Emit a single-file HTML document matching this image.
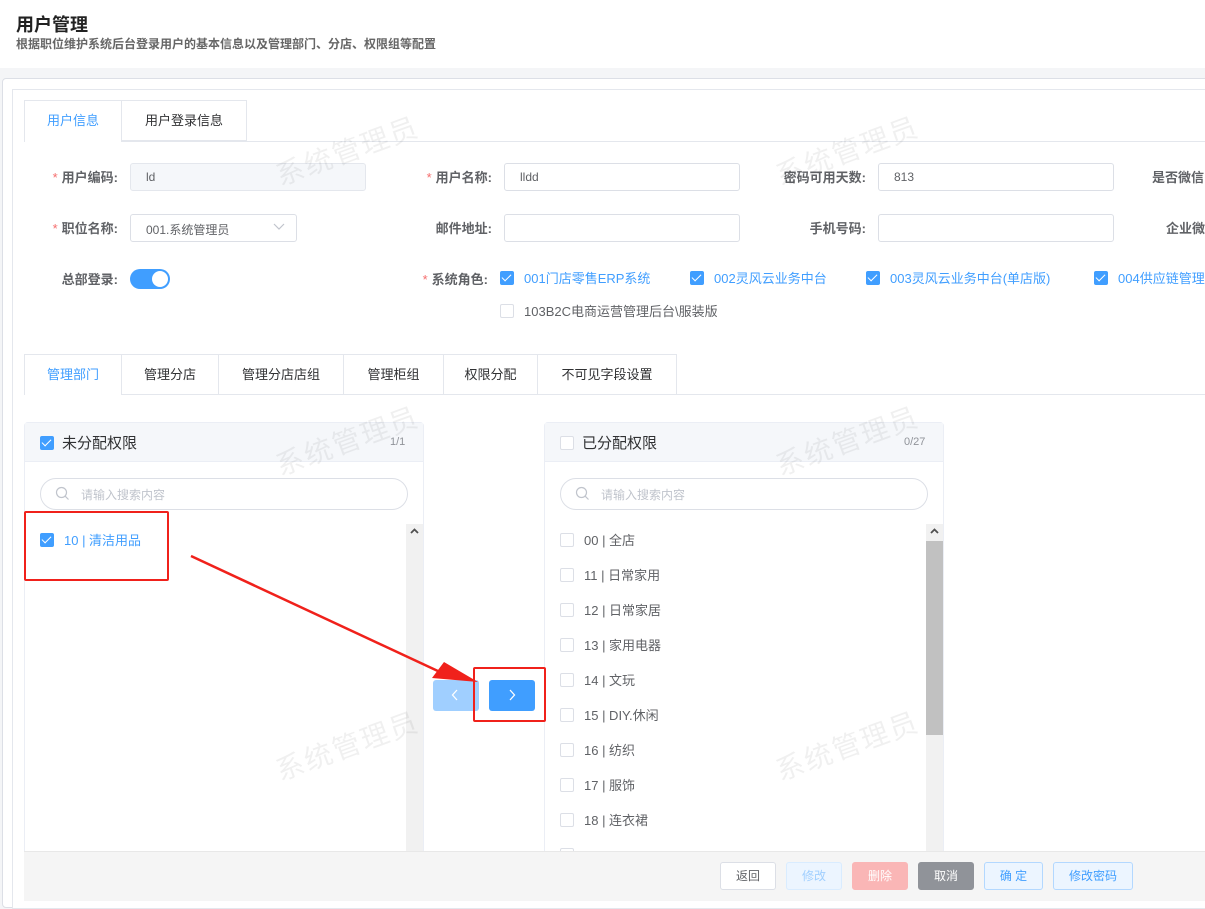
<!DOCTYPE html>
<html><head><meta charset="utf-8"><style>
*{box-sizing:border-box;margin:0;padding:0}
body{width:1205px;height:905px;overflow:hidden;background:#f4f5f7;font-family:"Liberation Sans","Noto Sans CJK SC",sans-serif;position:relative;color:#606266}
.a{position:absolute}
.hdr{left:0;top:0;width:1205px;height:68px;background:#fff}
.card{left:2px;top:78px;width:1210px;height:830px;background:#fff;border:1px solid #dcdfe6;border-radius:4px}
.lbl{font-size:13px;font-weight:bold;color:#606266;text-align:right;white-space:nowrap}
.req{color:#f56c6c;font-weight:normal;margin-right:4px}
.inp{height:28px;border:1px solid #dcdfe6;border-radius:3px;background:#fff;font-size:12px;color:#606266;padding:6px 15px}
.tab{height:41px;border:1px solid #e4e7ed;border-bottom:none;font-size:13px;color:#303133;text-align:center;line-height:40px}
.cb{width:14px;height:14px;border:1px solid #dcdfe6;border-radius:2px;background:#fff}
.cbon{width:14px;height:14px;border-radius:2px;background:#409eff}
.cbon:after{content:"";position:absolute;left:4px;top:1px;width:4px;height:8px;border:solid #fff;border-width:0 1.5px 1.5px 0;transform:rotate(45deg)}
.role{font-size:13px;color:#409eff;white-space:nowrap}
.item{font-size:13px;color:#606266;white-space:nowrap}
.wm{font-size:28px;color:rgba(0,0,0,0.06);transform:rotate(-20deg);white-space:nowrap;letter-spacing:2px}
.btn{top:862px;height:28px;border-radius:3px;font-size:12px;text-align:center;line-height:26px}
</style></head><body>
<div class="a hdr"></div>
<div class="a" style="left:16px;top:11px;font-size:18px;font-weight:bold;color:#222">用户管理</div>
<div class="a" style="left:16px;top:35px;font-size:12px;font-weight:bold;color:#666">根据职位维护系统后台登录用户的基本信息以及管理部门、分店、权限组等配置</div>
<div class="a card"></div>
<div class="a" style="left:12px;top:89px;width:1200px;height:820px;background:#fff;border:1px solid #e4e7ed"></div>

<div class="a" style="left:24px;top:141px;width:1190px;height:1px;background:#e4e7ed"></div>
<div class="a tab" style="left:24px;top:100px;width:98px;color:#409eff;background:#fff;height:42px">用户信息</div>
<div class="a tab" style="left:121px;top:100px;width:126px;border-bottom:1px solid #e4e7ed">用户登录信息</div>

<div class="a lbl" style="left:30px;top:167px;width:88px"><span class="req">*</span>用户编码:</div>
<div class="a inp" style="left:130px;top:163px;width:236px;background:#f5f7fa;border-color:#e4e7ed">ld</div>
<div class="a lbl" style="left:400px;top:167px;width:92px"><span class="req">*</span>用户名称:</div>
<div class="a inp" style="left:504px;top:163px;width:236px">lldd</div>
<div class="a lbl" style="left:760px;top:167px;width:106px">密码可用天数:</div>
<div class="a inp" style="left:878px;top:163px;width:236px">813</div>
<div class="a lbl" style="left:1152px;top:167px;text-align:left">是否微信</div>

<div class="a lbl" style="left:30px;top:218px;width:88px"><span class="req">*</span>职位名称:</div>
<div class="a inp" style="left:130px;top:214px;width:167px">001.系统管理员</div>
<svg class="a" style="left:273px;top:223px" width="12" height="8"><path d="M1 1L6 6L11 1" fill="none" stroke="#c0c4cc" stroke-width="1.2"/></svg>
<div class="a lbl" style="left:400px;top:218px;width:92px">邮件地址:</div>
<div class="a inp" style="left:504px;top:214px;width:236px"></div>
<div class="a lbl" style="left:760px;top:218px;width:106px">手机号码:</div>
<div class="a inp" style="left:878px;top:214px;width:236px"></div>
<div class="a lbl" style="left:1166px;top:218px;text-align:left">企业微</div>

<div class="a lbl" style="left:30px;top:269px;width:88px">总部登录:</div>
<div class="a" style="left:130px;top:269px;width:40px;height:20px;border-radius:10px;background:#409eff"></div>
<div class="a" style="left:152px;top:271px;width:16px;height:16px;border-radius:50%;background:#fff"></div>
<div class="a lbl" style="left:400px;top:269px;width:88px"><span class="req">*</span>系统角色:</div>
<div class="a cbon" style="left:500px;top:271px"></div><div class="a role" style="left:524px;top:268px">001门店零售ERP系统</div>
<div class="a cbon" style="left:690px;top:271px"></div><div class="a role" style="left:714px;top:268px">002灵风云业务中台</div>
<div class="a cbon" style="left:866px;top:271px"></div><div class="a role" style="left:890px;top:268px">003灵风云业务中台(单店版)</div>
<div class="a cbon" style="left:1094px;top:271px"></div><div class="a role" style="left:1118px;top:268px">004供应链管理</div>
<div class="a cb" style="left:500px;top:304px"></div><div class="a item" style="left:524px;top:301px">103B2C电商运营管理后台\服装版</div>

<div class="a" style="left:24px;top:394px;width:1190px;height:1px;background:#e4e7ed"></div>
<div class="a tab" style="left:24px;top:354px;width:98px;color:#409eff;background:#fff;height:41px">管理部门</div>
<div class="a tab" style="left:121px;top:354px;width:98px;border-bottom:1px solid #e4e7ed">管理分店</div>
<div class="a tab" style="left:218px;top:354px;width:126px;border-bottom:1px solid #e4e7ed">管理分店店组</div>
<div class="a tab" style="left:343px;top:354px;width:101px;border-bottom:1px solid #e4e7ed">管理柜组</div>
<div class="a tab" style="left:443px;top:354px;width:95px;border-bottom:1px solid #e4e7ed">权限分配</div>
<div class="a tab" style="left:537px;top:354px;width:140px;border-bottom:1px solid #e4e7ed">不可见字段设置</div>

<!-- left transfer -->
<div class="a" style="left:24px;top:422px;width:400px;height:440px;border:1px solid #ebeef5;border-radius:4px;background:#fff"></div>
<div class="a" style="left:25px;top:423px;width:398px;height:39px;background:#f5f7fa;border-bottom:1px solid #ebeef5"></div>
<div class="a cbon" style="left:40px;top:436px"></div>
<div class="a" style="left:62px;top:432px;font-size:15px;color:#303133">未分配权限</div>
<div class="a" style="left:390px;top:436px;font-size:11px;color:#909399">1/1</div>
<div class="a" style="left:40px;top:478px;width:368px;height:32px;border:1px solid #dcdfe6;border-radius:16px"></div>
<svg class="a" style="left:55px;top:486px" width="15" height="15"><circle cx="6.5" cy="6.5" r="5" fill="none" stroke="#c0c4cc" stroke-width="1.2"/><path d="M10.2 10.2L13.5 13.5" stroke="#c0c4cc" stroke-width="1.2"/></svg>
<div class="a" style="left:81px;top:486px;font-size:12px;color:#c0c4cc">请输入搜索内容</div>
<div class="a" style="left:406px;top:524px;width:17px;height:330px;background:#f1f1f1"></div>
<svg class="a" style="left:410px;top:528px" width="9" height="7"><path d="M1 5L4.5 1.5L8 5" fill="none" stroke="#505050" stroke-width="1.8"/></svg>
<div class="a cbon" style="left:40px;top:533px"></div>
<div class="a item" style="left:64px;top:530px;color:#409eff">10 | 清洁用品</div>

<!-- buttons -->
<div class="a" style="left:433px;top:680px;width:46px;height:31px;background:#a0cfff;border-radius:3px"></div>
<svg class="a" style="left:451px;top:689px" width="8" height="12"><path d="M6 1L1.5 6L6 11" fill="none" stroke="#fff" stroke-width="1.3"/></svg>
<div class="a" style="left:489px;top:680px;width:46px;height:31px;background:#409eff;border-radius:3px"></div>
<svg class="a" style="left:508px;top:689px" width="8" height="12"><path d="M2 1L6.5 6L2 11" fill="none" stroke="#fff" stroke-width="1.3"/></svg>

<!-- right transfer -->
<div class="a" style="left:544px;top:422px;width:400px;height:440px;border:1px solid #ebeef5;border-radius:4px;background:#fff"></div>
<div class="a" style="left:545px;top:423px;width:398px;height:39px;background:#f5f7fa;border-bottom:1px solid #ebeef5"></div>
<div class="a cb" style="left:560px;top:436px"></div>
<div class="a" style="left:582px;top:432px;font-size:15px;color:#303133">已分配权限</div>
<div class="a" style="left:904px;top:436px;font-size:11px;color:#909399">0/27</div>
<div class="a" style="left:560px;top:478px;width:368px;height:32px;border:1px solid #dcdfe6;border-radius:16px"></div>
<svg class="a" style="left:575px;top:486px" width="15" height="15"><circle cx="6.5" cy="6.5" r="5" fill="none" stroke="#c0c4cc" stroke-width="1.2"/><path d="M10.2 10.2L13.5 13.5" stroke="#c0c4cc" stroke-width="1.2"/></svg>
<div class="a" style="left:601px;top:486px;font-size:12px;color:#c0c4cc">请输入搜索内容</div>
<div class="a" style="left:926px;top:524px;width:17px;height:330px;background:#f1f1f1"></div>
<div class="a" style="left:926px;top:541px;width:17px;height:194px;background:#c1c1c1"></div>
<svg class="a" style="left:930px;top:528px" width="9" height="7"><path d="M1 5L4.5 1.5L8 5" fill="none" stroke="#505050" stroke-width="1.8"/></svg>
<div class="a cb" style="left:560px;top:533px"></div><div class="a item" style="left:584px;top:530px">00 | 全店</div>
<div class="a cb" style="left:560px;top:568px"></div><div class="a item" style="left:584px;top:565px">11 | 日常家用</div>
<div class="a cb" style="left:560px;top:603px"></div><div class="a item" style="left:584px;top:600px">12 | 日常家居</div>
<div class="a cb" style="left:560px;top:638px"></div><div class="a item" style="left:584px;top:635px">13 | 家用电器</div>
<div class="a cb" style="left:560px;top:673px"></div><div class="a item" style="left:584px;top:670px">14 | 文玩</div>
<div class="a cb" style="left:560px;top:708px"></div><div class="a item" style="left:584px;top:705px">15 | DIY.休闲</div>
<div class="a cb" style="left:560px;top:743px"></div><div class="a item" style="left:584px;top:740px">16 | 纺织</div>
<div class="a cb" style="left:560px;top:778px"></div><div class="a item" style="left:584px;top:775px">17 | 服饰</div>
<div class="a cb" style="left:560px;top:813px"></div><div class="a item" style="left:584px;top:810px">18 | 连衣裙</div>
<div class="a cb" style="left:560px;top:848px"></div>

<!-- watermarks -->
<div class="a wm" style="left:272px;top:130px">系统管理员</div>
<div class="a wm" style="left:772px;top:130px">系统管理员</div>
<div class="a wm" style="left:272px;top:420px">系统管理员</div>
<div class="a wm" style="left:772px;top:420px">系统管理员</div>
<div class="a wm" style="left:272px;top:725px">系统管理员</div>
<div class="a wm" style="left:772px;top:725px">系统管理员</div>

<!-- bottom bar -->
<div class="a" style="left:24px;top:851px;width:1190px;height:50px;background:#f5f5f5;border-top:1px solid #e8e8e8"></div>
<div class="a btn" style="left:720px;width:56px;background:#fff;border:1px solid #dcdfe6;color:#606266">返回</div>
<div class="a btn" style="left:786px;width:56px;background:#ecf5ff;border:1px solid #d9ecff;color:#a0cfff">修改</div>
<div class="a btn" style="left:852px;width:56px;background:#fab6b6;border:1px solid #fab6b6;color:#fff">删除</div>
<div class="a btn" style="left:918px;width:56px;background:#909399;border:1px solid #909399;color:#fff">取消</div>
<div class="a btn" style="left:984px;width:59px;background:#ecf5ff;border:1px solid #b3d8ff;color:#409eff">确 定</div>
<div class="a btn" style="left:1053px;width:80px;background:#ecf5ff;border:1px solid #b3d8ff;color:#409eff">修改密码</div>

<!-- annotations -->
<div class="a" style="left:24px;top:511px;width:145px;height:70px;border:2px solid #f0211b;border-radius:2px"></div>
<div class="a" style="left:473px;top:667px;width:73px;height:55px;border:2px solid #f0211b;border-radius:2px"></div>
<svg class="a" style="left:0;top:0" width="1205" height="905"><path d="M191 556L440 672" stroke="#f0211b" stroke-width="2.5"/><path d="M478 682L432 678L444 662Z" fill="#f0211b"/></svg>
</body></html>
